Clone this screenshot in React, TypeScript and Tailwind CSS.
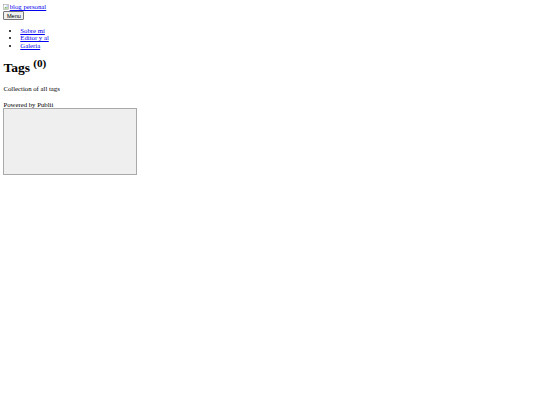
export default function App() {
  const serif = { fontFamily: '"Liberation Serif", "Times New Roman", serif' };

  return (
    <div className="min-h-[405px] bg-white p-[3.4px] text-[6.75px] leading-[7.7px] text-black" style={serif}>
      <header>
        <div className="h-[8px] leading-[8px]">
          <a href="#" className="text-[#0000ee] underline">
            <svg width="6" height="6" viewBox="0 0 16 16" className="mr-[0.3px] inline-block align-[-0.5px]">
              <rect x="1" y="1" width="14" height="14" fill="#fff" stroke="#9a9a9a" strokeWidth="1.5" />
              <path d="M3 12 L7 7 L10 10 L12 8 L13 12 Z" fill="#6aa84f" />
              <circle cx="11" cy="5" r="1.5" fill="#4a86e8" />
            </svg>
            blog personal
          </a>
        </div>
        <button className="block h-[8.5px] rounded-[1px] border-[0.8px] border-[#767676] bg-[#efefef] px-[2.5px] text-[5.6px] leading-[6px] text-black" style={{ fontFamily: '"Liberation Sans", Arial, sans-serif' }}>
          Menu
        </button>
        <nav>
          <ul className="my-[6.75px] list-disc pl-[16.9px] leading-[7.6px]">
            <li><a href="#" className="text-[#0000ee] underline">Sobre mí</a></li>
            <li><a href="#" className="text-[#0000ee] underline">Editor y al</a></li>
            <li><a href="#" className="text-[#0000ee] underline">Galería</a></li>
          </ul>
        </nav>
      </header>
      <main>
        <h1 className="mb-[9px] mt-[11px] text-[13.5px] font-bold leading-[15.5px]">
          Tags <sup className="text-[11.2px]">(0)</sup>
        </h1>
        <p className="mb-[8px] mt-[6.75px]">Collection of all tags</p>
      </main>
      <footer>
        <div>Powered by Publii</div>
        <div className="h-[67px] w-[134px] border border-[#a9a9a9] bg-[#efefef]" />
      </footer>
    </div>
  );
}
